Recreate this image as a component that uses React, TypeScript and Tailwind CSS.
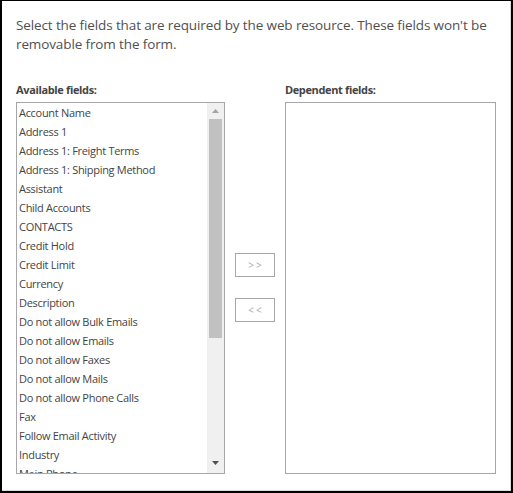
import React from "react";

const fields = [
  "Account Name",
  "Address 1",
  "Address 1: Freight Terms",
  "Address 1: Shipping Method",
  "Assistant",
  "Child Accounts",
  "CONTACTS",
  "Credit Hold",
  "Credit Limit",
  "Currency",
  "Description",
  "Do not allow Bulk Emails",
  "Do not allow Emails",
  "Do not allow Faxes",
  "Do not allow Mails",
  "Do not allow Phone Calls",
  "Fax",
  "Follow Email Activity",
  "Industry",
  "Main Phone",
];

export default function App() {
  return (
    <div
      className="w-[513px] h-[493px] bg-white border-black border-l-2 border-t border-r-2 border-b-2 overflow-hidden"
      style={{ fontFamily: '"Segoe UI", "Open Sans", "Noto Sans", sans-serif' }}
    >
      <div className="h-full border-r border-b border-[#dcdcdc] pl-[14px] pr-[14px] flex flex-col">
        <p className="mt-[15px] text-[13.5px] leading-[19px] text-[#505050] tracking-[-0.12px]">
          Select the fields that are required by the web resource. These fields won't be removable from the form.
        </p>
        <div className="mt-[29px] flex">
          <div className="flex flex-col w-[210px]">
            <div className="text-[11px] font-bold text-[#444] leading-[14px] h-[14px] tracking-[-0.35px]">Available fields:</div>
            <div className="mt-[5px] h-[372px] border border-[#a6a6ab] flex">
              <div className="flex-1 overflow-hidden pl-[2px]">
                {fields.map((f) => (
                  <div key={f} className="h-[19px] leading-[19px] text-[11px] text-[#444] whitespace-nowrap tracking-[-0.3px]">
                    {f}
                  </div>
                ))}
              </div>
              <div className="w-[17px] bg-[#f0f0f0] flex flex-col items-center">
                <div className="h-[16px] flex items-center justify-center">
                  <svg width="7" height="4" viewBox="0 0 7 4"><polygon points="0,4 7,4 3.5,0" fill="#a3a3a3" /></svg>
                </div>
                <div className="w-[13px] h-[219px] bg-[#c1c1c1]" />
                <div className="flex-1" />
                <div className="h-[16px] flex items-center justify-center mb-[2px]">
                  <svg width="7" height="4" viewBox="0 0 7 4"><polygon points="0,0 7,0 3.5,4" fill="#505050" /></svg>
                </div>
              </div>
            </div>
          </div>
          <div className="w-[60px] flex flex-col items-center pt-[170px]">
            <div className="w-[40px] h-[24px] shrink-0 border border-[#a6a6ab] flex items-center justify-center text-[10px] text-[#aaa] tracking-[2px] pl-[2px]">&gt;&gt;</div>
            <div className="mt-[21px] w-[40px] h-[24px] shrink-0 border border-[#a6a6ab] flex items-center justify-center text-[10px] text-[#aaa] tracking-[2px] pl-[2px]">&lt;&lt;</div>
          </div>
          <div className="flex flex-col w-[212px]">
            <div className="text-[11px] font-bold text-[#444] leading-[14px] h-[14px] tracking-[-0.35px]">Dependent fields:</div>
            <div className="mt-[5px] h-[372px] border border-[#a6a6ab]" />
          </div>
        </div>
      </div>
    </div>
  );
}
